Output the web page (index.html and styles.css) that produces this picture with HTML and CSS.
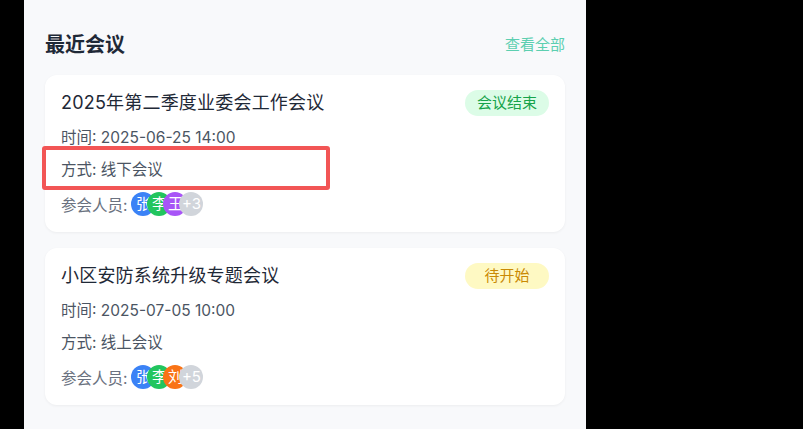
FILE: index.html
```html
<!DOCTYPE html>
<html>
<head>
  <meta charset="utf-8">
  <title>最近会议</title>
  <link rel="stylesheet" href="styles.css">
</head>
<body>
  <div class="panel">
    <div class="section-head">
      <h2>最近会议</h2>
      <a href="#" class="more">查看全部</a>
    </div>

    <div class="meeting">
      <div class="meeting-top">
        <div class="meeting-title">2025年第二季度业委会工作会议</div>
        <span class="badge done">会议结束</span>
      </div>
      <div class="meeting-info">时间: 2025-06-25 14:00</div>
      <div class="meeting-info">方式: 线下会议</div>
      <div class="members">
        <span class="members-label">参会人员:</span>
        <span class="avatar blue">张</span>
        <span class="avatar green">李</span>
        <span class="avatar purple">王</span>
        <span class="avatar more-count">+3</span>
      </div>
      <div class="highlight"></div>
    </div>

    <div class="meeting">
      <div class="meeting-top">
        <div class="meeting-title">小区安防系统升级专题会议</div>
        <span class="badge pending">待开始</span>
      </div>
      <div class="meeting-info">时间: 2025-07-05 10:00</div>
      <div class="meeting-info">方式: 线上会议</div>
      <div class="members">
        <span class="members-label">参会人员:</span>
        <span class="avatar blue">张</span>
        <span class="avatar green">李</span>
        <span class="avatar orange">刘</span>
        <span class="avatar more-count">+5</span>
      </div>
    </div>
  </div>
</body>
</html>
```

FILE: styles.css
```css
body {
  margin: 0;
  background: #000;
  font-family: Inter, "Noto Sans CJK SC", sans-serif;
  height: 429px;
  overflow: hidden;
}

.panel {
  margin-left: 24px;
  width: 562px;
  height: 429px;
  background: #f8f9fb;
  padding: 28px 21px 0;
  box-sizing: border-box;
}

.section-head {
  display: flex;
  justify-content: space-between;
  align-items: center;
  height: 30px;
  margin-bottom: 17px;
}

.section-head h2 {
  margin: 0;
  font-size: 20px;
  font-weight: 700;
  color: #1f2937;
}

.section-head .more {
  font-size: 15px;
  color: #5ccfb0;
  text-decoration: none;
}

.meeting {
  position: relative;
  background: #fff;
  border-radius: 12px;
  padding: 16px;
  margin-bottom: 16px;
  box-shadow: 0 1px 3px rgba(0, 0, 0, 0.05);
}

.meeting-top {
  display: flex;
  justify-content: space-between;
  align-items: center;
  height: 24px;
}

.meeting-title {
  font-size: 18px;
  line-height: 24px;
  color: #1f2937;
  letter-spacing: 0.2px;
}

.badge {
  width: 84px;
  font-size: 15px;
  line-height: 26px;
  text-align: center;
  border-radius: 13px;
}

.badge.done {
  background: #dcfce7;
  color: #16a34a;
}

.badge.pending {
  background: #fef9c3;
  color: #ca8a04;
}

.meeting-info {
  font-size: 15.5px;
  line-height: 22px;
  color: #4b5563;
  margin-top: 10px;
}

.meeting-top + .meeting-info {
  margin-top: 12px;
}

.members {
  display: flex;
  align-items: center;
  margin-top: 11px;
}

.members-label {
  font-size: 15.5px;
  color: #6b7280;
  margin-right: 12px;
}

.avatar {
  width: 24px;
  height: 24px;
  border-radius: 50%;
  margin-left: -8px;
  color: #fff;
  font-size: 15px;
  line-height: 24px;
  text-align: center;
  overflow: hidden;
}

.avatar.blue { background: #3b82f6; }
.avatar.green { background: #22c55e; }
.avatar.purple { background: #a855f7; }
.avatar.orange { background: #f97316; }
.avatar.more-count { background: #d1d5db; }

/* annotation box drawn over the card */
.highlight {
  position: absolute;
  left: -3px;
  top: 71px;
  width: 288px;
  height: 44px;
  box-sizing: border-box;
  border: 4px solid #f25555;
  border-radius: 3px;
}
```
